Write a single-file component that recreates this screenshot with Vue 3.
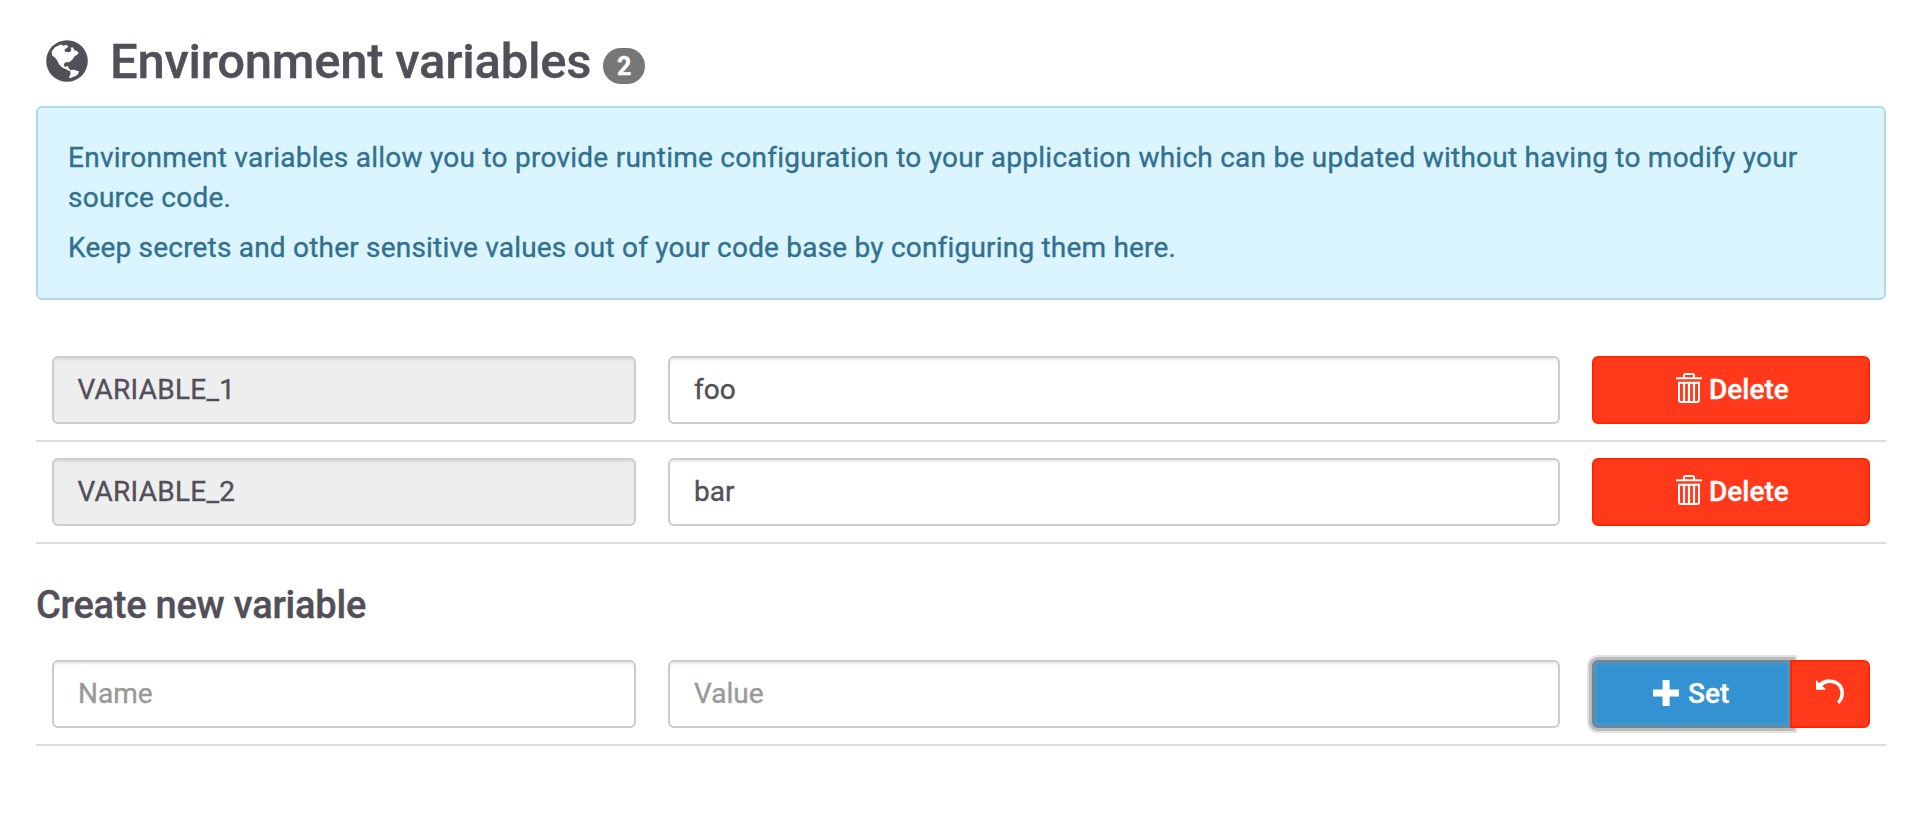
<script setup>
const variables = [
  { name: 'VARIABLE_1', value: 'foo' },
  { name: 'VARIABLE_2', value: 'bar' },
]
</script>

<template>
  <main class="page">
    <h1 class="title">
      <svg class="globe" viewBox="0 0 42 42">
        <circle cx="21" cy="21" r="20.8" fill="#524f59" />
        <path fill="#fff" d="M5.6 11.5 9 7.2 12.5 5.4 15 4.4 17.4 5.8 20 4.8 22.5 6.2 21.5 7.6 18.6 9.4 18.8 11.4 22 12.2 24.4 11.8 25.4 9.4 24.4 7.4 27 7.6 28.6 10.4 30.6 10.8 32.8 13.2 30 15.4 28.4 16.6 26.8 19 24.6 21.2 22.6 22.2 19.6 22.2 18 24 18.2 26.4 20.6 26.8 22 25.4 22.4 28 24.2 29.4 23.6 31.2 20 29.2 16.2 27.4 13.2 24.4 11.2 20.4 9 17.8 6.2 15.6Z" />
        <path fill="#fff" d="M24 30 28 29.8 33.2 31.4 31.4 35 27.8 36.8 24.4 38 22.8 37.4 24.6 34Z" />
      </svg>
      <span class="title-text">Environment variables</span>
      <span class="badge">2</span>
    </h1>

    <section class="info">
      <p>Environment variables allow you to provide runtime configuration to your application which can be updated without having to modify your source code.</p>
      <p class="second">Keep secrets and other sensitive values out of your code base by configuring them here.</p>
    </section>

    <div v-for="v in variables" :key="v.name" class="row">
      <div class="field locked">{{ v.name }}</div>
      <div class="field">{{ v.value }}</div>
      <button class="btn danger delete">
        <svg class="trash" viewBox="0 0 26 30" fill="none" stroke="#fff" stroke-width="2">
          <path d="M0 5.3H26M8 5V2.2Q8 1 9.4 1H16.6Q18 1 18 2.2V5M3 9V27Q3 29 5 29H21Q23 29 23 27V9M2 9.8H24" />
          <path stroke-width="2.2" d="M8 9V29M13 9V29M18 9V29" />
        </svg>
        <span>Delete</span>
      </button>
    </div>

    <h2 class="subtitle">Create new variable</h2>

    <div class="row">
      <div class="field hint">Name</div>
      <div class="field hint">Value</div>
      <div class="group">
        <button class="btn primary">
          <svg class="plus" viewBox="0 0 26 26"><path fill="#fff" d="M9.6 0h7v9.6H26v7h-9.4V26h-7v-9.4H0v-7h9.6z" /></svg>
          <span>Set</span>
        </button>
        <button class="btn danger undo" aria-label="Reset">
          <svg viewBox="0 0 28 26"><path fill="#fff" d="M0 1 3.2 4.2Q8 0 14 0.4C22 .4 28 6 28 14Q28 20 23.2 25L21 22.6Q24.4 19 24.4 14C24.4 8 20 4 14 4Q9.4 4 6.4 7L10 10.8H0Z" /></svg>
        </button>
      </div>
    </div>
  </main>
</template>

<style>
body { margin: 0; background: #fff; }
</style>

<style scoped>
* { box-sizing: border-box; }
.page {
  width: 1930px;
  height: 816px;
  padding: 32px 44px 0 36px;
  font-family: Roboto, "Liberation Sans", sans-serif;
  font-size: 28px;
  line-height: 40px;
  color: #524f59;
  -webkit-text-stroke: .35px currentColor;
}
.title {
  display: flex;
  align-items: center;
  height: 58px;
  margin: 0 0 16px;
  padding-left: 10px;
  font-size: 49px;
  font-weight: 500;
  white-space: nowrap;
}
.title-text { margin-top: 2px; letter-spacing: -.24px; }
.globe { width: 42px; height: 42px; margin-right: 22px; }
.badge {
  width: 42px;
  height: 36px;
  margin: 10px 0 0 12px;
  border-radius: 20px;
  background: #777;
  color: #fff;
  font-size: 25px;
  font-weight: 700;
  line-height: 38px;
  text-align: center;
}
.info {
  width: 1850px;
  height: 194px;
  margin-bottom: 40px;
  padding: 30px;
  border: 2px solid #afd9e8;
  border-radius: 6px;
  background: #dbf5ff;
  color: #31708f;
  letter-spacing: .25px;
}
.info p { margin: 0 0 10px; }
.info .second { letter-spacing: .2px; }
.row {
  display: grid;
  grid-template-columns: 584px 892px 278px;
  column-gap: 32px;
  width: 1850px;
  height: 102px;
  padding: 16px;
  border-bottom: 2px solid #ddd;
}
.field {
  height: 68px;
  padding: 12px 24px;
  border: 2px solid #ccc;
  border-radius: 6px;
  background: #fff;
  box-shadow: inset 0 2px 2px rgba(0, 0, 0, .075);
}
.locked { padding-left: 23.5px; background: #eee; letter-spacing: .25px; }
.hint { color: #999; }
.btn {
  display: flex;
  align-items: center;
  justify-content: center;
  height: 68px;
  margin: 0;
  padding: 0;
  border: 2px solid #ff2600;
  border-radius: 6px;
  background: #ff391a;
  color: #fff;
  font: 500 28px/40px Roboto, "Liberation Sans", sans-serif;
}
.delete { justify-content: flex-start; padding-left: 82px; }
.trash { width: 26px; height: 30px; margin: -5px 7px 0 0; }
.group { display: flex; }
.primary {
  justify-content: flex-start;
  width: 200px;
  padding-left: 59px;
  border-color: #6f8797;
  border-right-color: #5b93ba;
  border-radius: 6px 0 0 6px;
  background: #3392d1;
  box-shadow: inset 0 0 0 3px #4d94c3, 0 0 0 3px #bbb, 0 0 0 5px #e3e3e3;
}
.plus { width: 26px; height: 26px; margin: -2px 9px 0 0; }
.undo { position: relative; width: 80px; margin-left: -2px; border-radius: 0 6px 6px 0; }
.undo svg { width: 28px; height: 26px; margin-top: -4px; }
.subtitle {
  height: 40px;
  margin: 40px 0 20px;
  padding-top: 1px;
  font-size: 38px;
  font-weight: 500;
  letter-spacing: -.23px;
  white-space: nowrap;
}
</style>
